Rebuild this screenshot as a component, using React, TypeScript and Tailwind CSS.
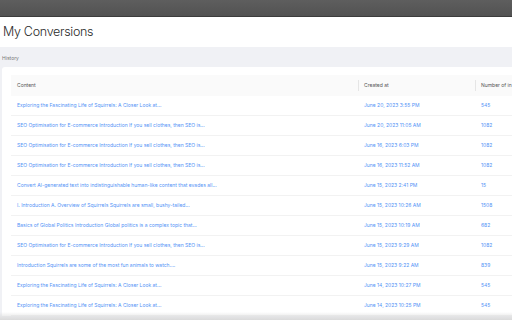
const rows = [
  ["Exploring the Fascinating Life of Squirrels: A Closer Look at...", "June 20, 2023 3:55 PM", "545"],
  ["SEO Optimisation for E-commerce Introduction If you sell clothes, then SEO is...", "June 20, 2023 11:05 AM", "1082"],
  ["SEO Optimisation for E-commerce Introduction If you sell clothes, then SEO is...", "June 16, 2023 6:03 PM", "1082"],
  ["SEO Optimisation for E-commerce Introduction If you sell clothes, then SEO is...", "June 16, 2023 11:52 AM", "1082"],
  ["Convert AI-generated text into indistinguishable human-like content that evades all...", "June 15, 2023 2:41 PM", "15"],
  ["I. Introduction A. Overview of Squirrels Squirrels are small, bushy-tailed...", "June 15, 2023 10:26 AM", "1508"],
  ["Basics of Global Politics Introduction Global politics is a complex topic that...", "June 15, 2023 10:19 AM", "682"],
  ["SEO Optimisation for E-commerce Introduction If you sell clothes, then SEO is...", "June 15, 2023 9:29 AM", "1082"],
  ["Introduction Squirrels are some of the most fun animals to watch....", "June 15, 2023 9:22 AM", "839"],
  ["Exploring the Fascinating Life of Squirrels: A Closer Look at...", "June 14, 2023 10:27 PM", "545"],
  ["Exploring the Fascinating Life of Squirrels: A Closer Look at...", "June 14, 2023 10:25 PM", "545"],
];

export default function App() {
  return (
    <div className="relative w-[512px] h-[320px] overflow-hidden bg-[#f0f1f5] font-['Inter',sans-serif]">
      <div className="h-[17px] bg-gradient-to-b from-[#5e5e5e] to-[#525252] border-b border-[#3c3c3c]" />
      <div className="h-[30px] bg-white flex items-center px-[3px]">
        <h1 className="text-[12.5px] font-light text-[#2a2a2a] tracking-[-0.3px]">My Conversions</h1>
      </div>
      <div className="px-[2px] h-[20px] pt-[8px]">
        <span className="block text-[5px] leading-[6px] text-[#777]">History</span>
      </div>
      <div className="ml-[2px] bg-white rounded-tl-[3px] pt-[8px] pl-[9px]">
        <div className="grid grid-cols-[347px_117px_1fr] h-[21px] items-center bg-[#fafafa] text-[5px] text-[#555]">
          <div className="pl-[6px]">Content</div>
          <div className="border-l border-[#e5e5e5] pl-[5px] h-[11px] flex items-center">Created at</div>
          <div className="border-l border-[#e5e5e5] pl-[5px] h-[11px] flex items-center whitespace-nowrap overflow-hidden">Number of in</div>
        </div>
        {rows.map((r, i) => (
          <div
            key={i}
            className="grid grid-cols-[347px_117px_1fr] h-[20px] items-center border-b border-[#f2f2f2] text-[5px] text-[#5393f6] whitespace-nowrap"
          >
            <div className="pl-[6px] pt-[1px]">{r[0]}</div>
            <div className="pl-[6px] pt-[1px]">{r[1]}</div>
            <div className="pl-[6px] pt-[1px]">{r[2]}</div>
          </div>
        ))}
      </div>
      <div className="absolute left-0 right-0 bottom-0 h-[8px] bg-gradient-to-b from-transparent to-[#dadada]" />
    </div>
  );
}
